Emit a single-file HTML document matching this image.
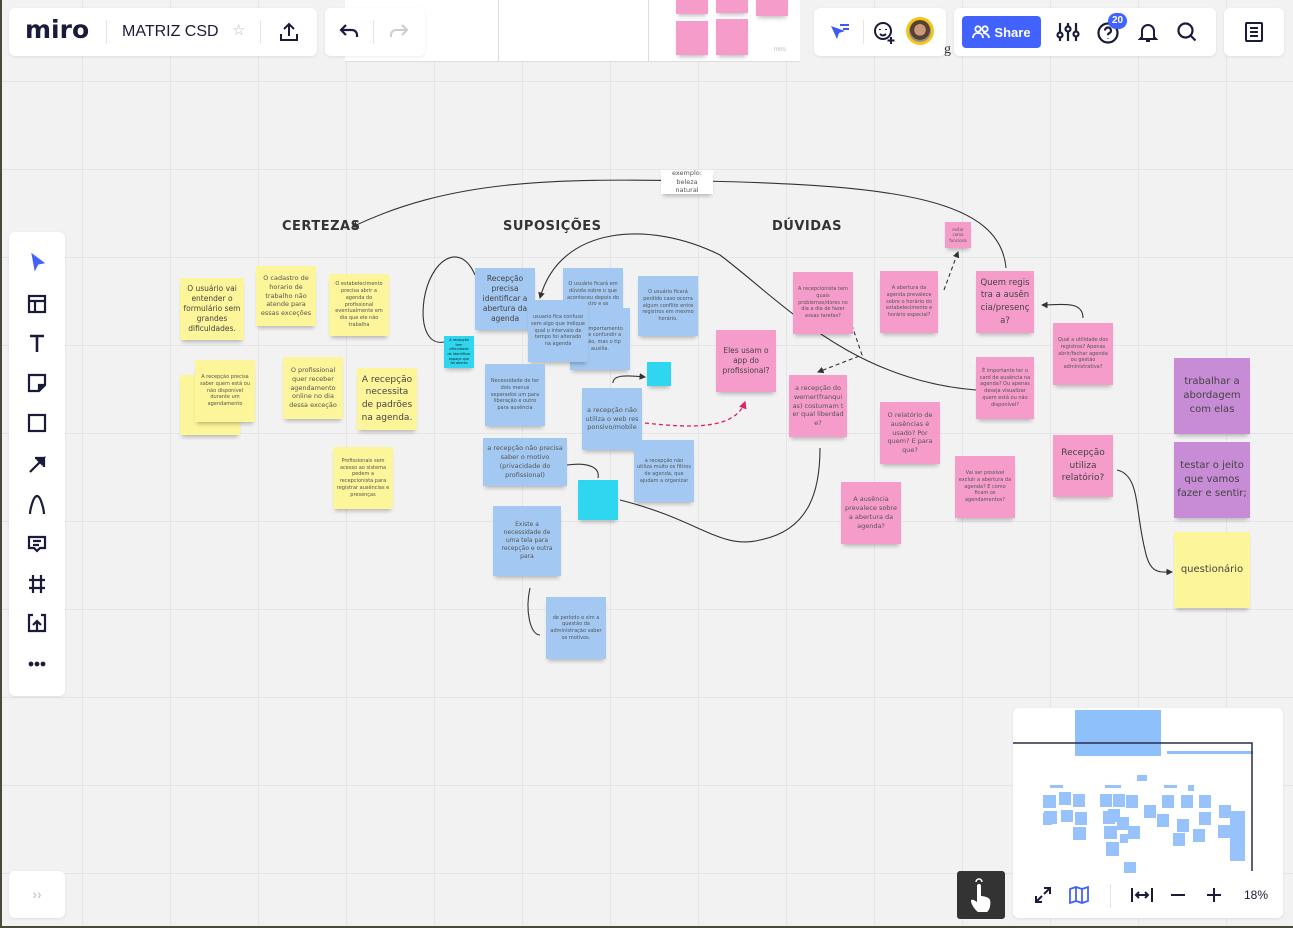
<!DOCTYPE html>
<html><head><meta charset="utf-8">
<style>
*{box-sizing:border-box;margin:0;padding:0}
body{width:1293px;height:928px;overflow:hidden;position:relative;font-family:"Liberation Sans",sans-serif;
background-color:#f2f2f2;
background-image:linear-gradient(to right,#e5e5e5 1px,transparent 1px),linear-gradient(to bottom,#e5e5e5 1px,transparent 1px);
background-size:88px 88px;background-position:82px 81px}
.n{position:absolute;display:flex;align-items:center;justify-content:center;text-align:center;padding:3px;color:#555;font-size:5px;line-height:1.35;box-shadow:0 4px 4px -2px rgba(0,0,0,.25);font-family:"DejaVu Sans",sans-serif;overflow:hidden}
.y{background:#fdf59a}.b{background:#a3c9f2}.p{background:#f59ccb}.c{background:#2ed6ef}.v{background:#c88bd6}
.m{font-size:7.5px;color:#444}.l{font-size:9px;color:#444;line-height:1.4}
.h{position:absolute;font-size:13px;font-weight:bold;color:#333;letter-spacing:.5px;font-family:"DejaVu Sans",sans-serif}
.panel{position:absolute;background:#fff;border-radius:6px;box-shadow:0 1px 3px rgba(0,0,0,.08)}
svg.a{position:absolute}
</style></head><body>

<div style="position:absolute;left:345px;top:0;width:455px;height:62px;background:#fff;border-bottom:1px solid #ddd"></div>
<div style="position:absolute;left:498px;top:0;width:1px;height:62px;background:#ddd"></div>
<div style="position:absolute;left:648px;top:0;width:1px;height:62px;background:#ddd"></div>
<div class="n p" style="left:676px;top:0;width:32px;height:14px"></div>
<div class="n p" style="left:716px;top:0;width:32px;height:13px"></div>
<div class="n p" style="left:756px;top:0;width:32px;height:16px"></div>
<div class="n p" style="left:676px;top:21px;width:32px;height:34px"></div>
<div class="n p" style="left:716px;top:19px;width:32px;height:36px"></div>
<div style="position:absolute;left:774px;top:47px;font-size:6px;color:#bbb">miro</div>

<svg class="a" width="1293" height="928" style="left:0;top:0">
<defs>
<marker id="a" markerWidth="6" markerHeight="6" refX="5" refY="3" orient="auto"><path d="M0,0 L6,3 L0,6 z" fill="#333"/></marker>
<marker id="ap" markerWidth="6" markerHeight="6" refX="5" refY="3" orient="auto"><path d="M0,0 L6,3 L0,6 z" fill="#e0206a"/></marker>
</defs>
<g fill="none" stroke="#333" stroke-width="1.1">
<path d="M1006,268 C1000,200 900,185 700,181 C550,178 450,180 352,227" marker-end="url(#a)"/>
<path d="M976,390 C850,380 780,300 720,255 C650,220 560,225 540,298" marker-end="url(#a)"/>
<path d="M475,275 C460,240 430,260 424,300 C420,330 430,345 444,342"/>
<path d="M1083,318 C1083,300 1060,305 1042,305" marker-end="url(#a)"/>
<path d="M613,383 C613,375 625,375 645,377" marker-end="url(#a)"/>
<path d="M567,465 C590,462 600,468 598,478"/>
<path d="M620,500 C700,520 720,550 760,540 C810,530 820,490 820,448"/>
<path d="M1117,470 C1140,475 1135,510 1145,550 C1150,575 1160,572 1172,572" marker-end="url(#a)"/>
<path d="M530,588 C525,610 530,635 540,635"/>
<path d="M845,305 L862,355 L818,372" stroke-dasharray="4,3" marker-end="url(#a)"/>
<path d="M944,290 L958,252" stroke-dasharray="4,3" marker-end="url(#a)"/>
</g>
<path d="M645,423 C690,428 735,430 745,402" fill="none" stroke="#e0206a" stroke-width="1.3" stroke-dasharray="4,3" marker-end="url(#ap)"/>
</svg>

<div class="n" style="left:661px;top:170px;width:52px;height:24px;background:#fff;font-size:6.5px;color:#555">exemplo:<br>beleza natural</div>

<div class="h" style="left:282px;top:219px">CERTEZAS</div>
<div class="h" style="left:503px;top:219px">SUPOSIÇÕES</div>
<div class="h" style="left:772px;top:219px">DÚVIDAS</div>

<div class="n y" style="left:180px;top:375px;width:60px;height:60px"></div>
<div class="n y m" style="left:180px;top:278px;width:64px;height:62px">O usuário vai entender o formulário sem grandes dificuldades.</div>
<div class="n y" style="left:256px;top:266px;width:60px;height:60px;font-size:6.5px">O cadastro de horario de trabalho não atende para essas exceções</div>
<div class="n y" style="left:329px;top:274px;width:60px;height:62px">O estabelecimento precisa abrir a agenda do profissional eventualmente em dia que ele não trabalha</div>
<div class="n y" style="left:195px;top:360px;width:60px;height:62px">A recepção precisa saber quem está ou não disponível durante um agendamento</div>
<div class="n y" style="left:283px;top:357px;width:60px;height:62px;font-size:6.5px">O profissional quer receber agendamento online no dia dessa exceção</div>
<div class="n y l" style="left:357px;top:368px;width:60px;height:62px">A recepção necessita de padrões na agenda.</div>
<div class="n y" style="left:333px;top:447px;width:60px;height:62px">Profissionais sem acesso ao sistema pedem a recepcionista para registrar ausências e presenças</div>

<div class="n b m" style="left:475px;top:268px;width:60px;height:62px">Recepção precisa identificar a abertura da agenda</div>
<div class="n b" style="left:563px;top:268px;width:60px;height:60px">O usuário ficará em dúvida sobre o que aconteceu depois do registro e as alterações</div>
<div class="n b" style="left:570px;top:308px;width:60px;height:62px">O comportamento pode confundir a opção, mas o tip auxilia.</div>
<div class="n b" style="left:528px;top:300px;width:60px;height:62px">usuario fica confuso sem algo que indique qual o intervalo de tempo foi alterado na agenda</div>
<div class="n b" style="left:638px;top:276px;width:60px;height:60px">O usuário ficará perdido caso ocorra algum conflito entre registros em mesmo horário.</div>
<div class="n b" style="left:485px;top:364px;width:60px;height:62px">Necessidade de ter dois menus separados um para liberação e outro para ausência</div>
<div class="n b" style="left:582px;top:388px;width:60px;height:62px;font-size:6.5px;word-break:break-all">a recepção não utiliza o web responsivo/mobile</div>
<div class="n b" style="left:483px;top:438px;width:84px;height:48px;font-size:6.5px">a recepção não precisa saber o motivo (privacidade do profissional)</div>
<div class="n b" style="left:634px;top:440px;width:60px;height:62px">a recepção não utiliza muito os filtros de agenda, que ajudam a organizar</div>
<div class="n b" style="left:493px;top:506px;width:68px;height:70px;font-size:6px">Existe a necessidade de uma tela para recepção e outra para</div>
<div class="n b" style="left:546px;top:597px;width:60px;height:62px">de período e sim a questão da administração saber os motivos.</div>
<div class="n c" style="left:444px;top:336px;width:30px;height:32px;font-size:3.5px;color:#222">A recepção tem dificuldade de identificar espaço que foi aberto</div>
<div class="n c" style="left:647px;top:362px;width:24px;height:24px;font-size:3px;color:#222"></div>
<div class="n c" style="left:578px;top:480px;width:40px;height:40px;font-size:3px;color:#222"></div>

<div class="n p" style="left:945px;top:222px;width:26px;height:26px;font-size:4px">evitar como funciona</div>
<div class="n p" style="left:793px;top:272px;width:60px;height:62px">A recepcionista tem quais problemas/dores no dia a dia de fazer essas tarefas?</div>
<div class="n p" style="left:880px;top:271px;width:58px;height:62px">A abertura da agenda prevalece sobre o horário do estabelecimento e horário especial?</div>
<div class="n p" style="left:976px;top:271px;width:58px;height:62px;font-size:8.5px;color:#444;line-height:1.5;word-break:break-all">Quem registra a ausência/presença?</div>
<div class="n p m" style="left:716px;top:330px;width:60px;height:62px">Eles usam o app do profissional?</div>
<div class="n p" style="left:789px;top:375px;width:58px;height:62px;font-size:6.5px;word-break:break-all">a recepção do werner(franquias) costumam ter qual liberdade?</div>
<div class="n p" style="left:1053px;top:323px;width:60px;height:62px">Qual a utilidade dos registros? Apenas abrir/fechar agenda ou gestão administrativa?</div>
<div class="n p" style="left:976px;top:357px;width:58px;height:62px">É importante ter o card de ausência na agenda? Ou apenas deseja visualizar quem está ou não disponível?</div>
<div class="n p" style="left:880px;top:402px;width:60px;height:62px;font-size:6.5px">O relatório de ausências é usado? Por quem? E para que?</div>
<div class="n p" style="left:955px;top:456px;width:60px;height:62px">Vai ser possível excluir a abertura da agenda? E como ficam os agendamentos?</div>
<div class="n p l" style="left:1053px;top:435px;width:60px;height:62px">Recepção utiliza relatório?</div>
<div class="n p" style="left:841px;top:482px;width:60px;height:62px;font-size:6.5px">A ausência prevalece sobre a abertura da agenda?</div>
<div class="n v l" style="left:1174px;top:358px;width:76px;height:76px;font-size:10px">trabalhar a abordagem com elas</div>
<div class="n v l" style="left:1174px;top:442px;width:76px;height:76px;font-size:10px">testar o jeito que vamos fazer e sentir;</div>
<div class="n y l" style="left:1174px;top:532px;width:76px;height:76px;font-size:10px">questionário</div>

<div class="panel" style="left:9px;top:8px;width:308px;height:48px"></div>
<div style="position:absolute;left:25px;top:15px;font-size:25px;font-weight:bold;color:#1a1a3a;letter-spacing:0px;font-family:'DejaVu Sans',sans-serif">miro</div>
<div style="position:absolute;left:106px;top:20px;width:1px;height:24px;background:#e5e5e5"></div>
<div style="position:absolute;left:122px;top:23px;font-size:16px;color:#1a1a3a">MATRIZ CSD</div>
<div style="position:absolute;left:232px;top:21px;font-size:15px;color:#bbb">☆</div>
<div style="position:absolute;left:260px;top:20px;width:1px;height:24px;background:#e5e5e5"></div>
<svg class="a" style="left:278px;top:21px" width="22" height="22" viewBox="0 0 22 22" fill="none" stroke="#1a1a3a" stroke-width="2"><path d="M11 15V3M6 8l5-5 5 5M3 13v6h16v-6"/></svg>
<div class="panel" style="left:325px;top:8px;width:100px;height:48px"></div>
<svg class="a" style="left:338px;top:22px" width="22" height="20" viewBox="0 0 22 20" fill="none" stroke="#1a1a3a" stroke-width="2.2"><path d="M4 8h10a5 5 0 0 1 5 5v2M8 3L3 8l5 5"/></svg>
<div style="position:absolute;left:373px;top:20px;width:1px;height:24px;background:#e5e5e5"></div>
<svg class="a" style="left:388px;top:22px" width="22" height="20" viewBox="0 0 22 20" fill="none" stroke="#ccc" stroke-width="2"><path d="M18 8H8a5 5 0 0 0-5 5v2M14 3l5 5-5 5"/></svg>

<div class="panel" style="left:814px;top:8px;width:132px;height:48px"></div>
<svg class="a" style="left:828px;top:21px" width="24" height="22" viewBox="0 0 24 22"><path d="M3 5l14 5-6 2-2 6z" fill="#3d5af1"/><path d="M12 4h9M15 8h6" stroke="#3d5af1" stroke-width="2"/></svg>
<div style="position:absolute;left:863px;top:20px;width:1px;height:24px;background:#e5e5e5"></div>
<svg class="a" style="left:872px;top:20px" width="26" height="26" viewBox="0 0 26 26" fill="none" stroke="#1a1a3a" stroke-width="2"><circle cx="11" cy="11" r="8"/><path d="M8 9v1M14 9v1M8 14c2 2 4 2 6 0M19 17v7M15.5 20.5h7"/></svg>
<div style="position:absolute;left:906px;top:17px;width:28px;height:28px;border-radius:50%;border:3px solid #f5c518;background:radial-gradient(circle at 50% 45%,#c99a7a 0 35%,#5a4030 36% 60%,#8a9090 61%)"></div>
<div class="panel" style="left:954px;top:8px;width:262px;height:48px"></div>
<div style="position:absolute;left:962px;top:16px;width:79px;height:32px;background:#4262ff;border-radius:4px;color:#fff;font-size:13px;font-weight:bold;display:flex;align-items:center;justify-content:center;gap:4px">
<svg width="18" height="14" viewBox="0 0 18 14" fill="none" stroke="#fff" stroke-width="1.8"><circle cx="6" cy="4" r="2.7"/><circle cx="13" cy="4" r="2.7"/><path d="M1 13c0-3 2-5 5-5s5 2 5 5M11 8c3 0 6 2 6 5"/></svg><span>Share</span></div>
<svg class="a" style="left:1056px;top:21px" width="24" height="22" viewBox="0 0 24 22" fill="none" stroke="#1a1a3a" stroke-width="2.2"><path d="M4 2v18M12 2v18M20 2v18"/><circle cx="4" cy="14" r="2.5" fill="#fff"/><circle cx="12" cy="8" r="2.5" fill="#fff"/><circle cx="20" cy="13" r="2.5" fill="#fff"/></svg>
<svg class="a" style="left:1096px;top:21px" width="24" height="24" viewBox="0 0 24 24" fill="none" stroke="#1a1a3a" stroke-width="2.2"><circle cx="12" cy="12" r="9.5"/><path d="M9 9.5a3 3 0 1 1 4 2.8c-1 .4-1 1-1 2M12 17v.5"/></svg>
<div style="position:absolute;left:1108px;top:13px;width:19px;height:16px;border-radius:8px;background:#4262ff;color:#fff;font-size:10px;font-weight:bold;text-align:center;line-height:16px">20</div>
<svg class="a" style="left:1137px;top:21px" width="22" height="22" viewBox="0 0 22 22" fill="none" stroke="#1a1a3a" stroke-width="2"><path d="M5 16V10a6 6 0 0 1 12 0v6l2 2H3zM9 20h4"/></svg>
<svg class="a" style="left:1176px;top:21px" width="22" height="22" viewBox="0 0 22 22" fill="none" stroke="#1a1a3a" stroke-width="2.2"><circle cx="9.5" cy="9.5" r="7"/><path d="M14.5 14.5l5 5"/></svg>
<div class="panel" style="left:1224px;top:8px;width:60px;height:48px"></div>
<svg class="a" style="left:1243px;top:21px" width="22" height="22" viewBox="0 0 22 22" fill="none" stroke="#1a1a3a" stroke-width="2"><rect x="3" y="2" width="16" height="18" rx="1"/><path d="M7 7h8M7 11h8M7 15h8"/></svg>
<div style="position:absolute;left:944px;top:42px;font-size:14px;color:#333;font-family:'Liberation Serif',serif">g</div>

<div class="panel" style="left:9px;top:232px;width:56px;height:464px"></div>
<svg class="a" style="left:25px;top:250px" width="24" height="430" viewBox="0 0 24 430" fill="none" stroke="#1a1a3a" stroke-width="2.2">
<path d="M7 4l12 9-6 1-3 6z" fill="#4262ff" stroke="#4262ff" stroke-width="1"/>
<rect x="4" y="46" width="16" height="16"/><path d="M4 51h16M10 51v11"/>
<path d="M5 86h14M12 86v16" stroke-width="2.6"/>
<path d="M4 125h16v10l-6 6H4z"/><path d="M14 141v-6h6" fill="#1a1a3a"/>
<rect x="4" y="165" width="16" height="16"/>
<path d="M5 222l13-13M10 208h9v9"/><path d="M19 208l-6 2 4 4z" fill="#1a1a3a"/>
<path d="M5 264c0-3 3-18 7-18s7 15 7 18"/>
<path d="M4 287h16v11h-5l-3 3-3-3H4z"/><path d="M8 291h8M8 295h6"/>
<path d="M8 325v18M16 325v18M4 330h16M4 338h16"/>
<path d="M8 365H4v16h16v-16h-4M12 381v-10M8 375l4-4 4 4"/>
<circle cx="6" cy="414" r="1.3" fill="#1a1a3a"/><circle cx="12" cy="414" r="1.3" fill="#1a1a3a"/><circle cx="18" cy="414" r="1.3" fill="#1a1a3a"/>
</svg>
<div class="panel" style="left:9px;top:871px;width:56px;height:47px;color:#ccc;font-size:14px;text-align:center;line-height:47px;font-weight:bold">››</div>

<div class="panel" style="left:1013px;top:708px;width:270px;height:210px"></div>
<svg class="a" style="left:1013px;top:708px" width="270" height="165" viewBox="0 0 270 165">
<rect x="62" y="2" width="86" height="46" fill="#8ec0fb"/>
<rect x="154" y="43" width="86" height="3" fill="#8ec0fb"/>
<path d="M0 35H239V163" fill="none" stroke="#2a2a4a" stroke-width="1.5"/>
<g fill="#7eb3fb" opacity=".8">
<rect x="30" y="87" width="13" height="13"/><rect x="46" y="84" width="12" height="13"/><rect x="60" y="86" width="12" height="13"/>
<rect x="31" y="103" width="13" height="13"/><rect x="48" y="102" width="12" height="12"/><rect x="62" y="104" width="12" height="13"/><rect x="30" y="105" width="9" height="12"/>
<rect x="60" y="119" width="13" height="13"/>
<rect x="87" y="86" width="12" height="13"/><rect x="100" y="86" width="12" height="13"/><rect x="113" y="87" width="12" height="13"/>
<rect x="95" y="101" width="12" height="13"/><rect x="90" y="103" width="12" height="13"/><rect x="91" y="118" width="13" height="13"/><rect x="104" y="109" width="12" height="13"/>
<rect x="93" y="134" width="13" height="14"/><rect x="107" y="126" width="8" height="9"/><rect x="115" y="118" width="12" height="13"/>
<rect x="111" y="154" width="12" height="13"/><rect x="131" y="97" width="12" height="13"/>
<rect x="149" y="87" width="12" height="13"/><rect x="168" y="87" width="12" height="13"/><rect x="186" y="87" width="12" height="13"/>
<rect x="144" y="106" width="12" height="13"/><rect x="164" y="111" width="12" height="13"/><rect x="186" y="104" width="12" height="13"/><rect x="206" y="97" width="12" height="13"/>
<rect x="160" y="125" width="12" height="13"/><rect x="180" y="121" width="12" height="13"/><rect x="205" y="117" width="12" height="13"/>
<rect x="217" y="103" width="15" height="50"/>
<rect x="37" y="77" width="13" height="3"/><rect x="92" y="77" width="16" height="3"/><rect x="124" y="67" width="10" height="6"/><rect x="151" y="77" width="13" height="3"/><rect x="175" y="77" width="6" height="6"/>
</g>
</svg>
<div style="position:absolute;left:1110px;top:884px;width:1px;height:24px;background:#e5e5e5"></div>
<svg class="a" style="left:1033px;top:885px" width="20" height="20" viewBox="0 0 20 20" fill="none" stroke="#1a1a3a" stroke-width="2"><path d="M3 17l6-6M3 11v6h6M17 3l-6 6M17 9V3h-6"/></svg>
<svg class="a" style="left:1068px;top:884px" width="22" height="22" viewBox="0 0 22 22" fill="none" stroke="#4262ff" stroke-width="1.8"><path d="M2 5l6-2 6 2 6-2v14l-6 2-6-2-6 2zM8 3v14M14 5v14"/></svg>
<svg class="a" style="left:1130px;top:886px" width="24" height="18" viewBox="0 0 24 18" fill="none" stroke="#1a1a3a" stroke-width="2"><path d="M2 2v14M22 2v14M6 9h12M9 6l-3 3 3 3M15 6l3 3-3 3"/></svg>
<svg class="a" style="left:1170px;top:887px" width="16" height="16" viewBox="0 0 16 16" stroke="#1a1a3a" stroke-width="2"><path d="M1 8h14"/></svg>
<svg class="a" style="left:1206px;top:887px" width="16" height="16" viewBox="0 0 16 16" stroke="#1a1a3a" stroke-width="2"><path d="M1 8h14M8 1v14"/></svg>
<div style="position:absolute;left:1244px;top:888px;font-size:12px;color:#1a1a3a">18%</div>

<div style="position:absolute;left:957px;top:871px;width:48px;height:48px;background:#333;border-radius:3px"></div>
<svg class="a" style="left:966px;top:876px" width="30" height="40" viewBox="0 0 30 40"><path d="M10 6a3 3 0 0 1 6 0" fill="none" stroke="#fff" stroke-width="1.5"/><path d="M11 10a2 2 0 0 1 4 0v10c2 0 8 1 9 4s0 10-3 12H12c-3-2-7-8-7-11 0-2 2-2 6 1z" fill="#fff"/></svg>

<div style="position:absolute;left:0;top:0;width:2px;height:928px;background:#4a4a3a"></div>
<div style="position:absolute;left:0;top:926px;width:1293px;height:2px;background:#4a4a3a"></div>
</body></html>
